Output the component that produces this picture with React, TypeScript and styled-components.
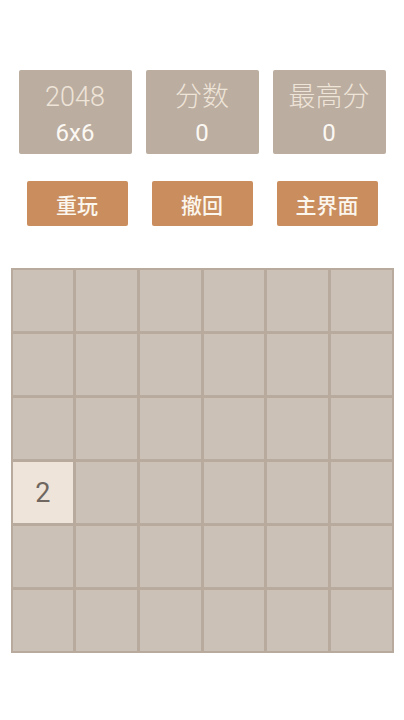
import React from "react";
import styled, { createGlobalStyle } from "styled-components";

const GlobalStyle = createGlobalStyle`
  html, body {
    margin: 0;
    padding: 0;
    background: #ffffff;
    font-family: Roboto, "Noto Sans CJK SC", sans-serif;
  }
`;

const Page = styled.div`
  display: flex;
  flex-direction: column;
  align-items: center;
  padding-top: 70px;
`;

const StatsRow = styled.div`
  display: flex;
  gap: 14px;
`;

const StatBox = styled.div`
  width: 113px;
  height: 84px;
  box-sizing: border-box;
  padding-top: 5px;
  background: #bbada0;
  border-radius: 2px;
  display: flex;
  flex-direction: column;
  align-items: center;
  justify-content: center;
  gap: 4px;
`;

const StatLabel = styled.div`
  font-size: 27px;
  font-weight: 300;
  line-height: 32px;
  color: #eee4d8;
`;

const StatValue = styled.div`
  font-size: 24px;
  line-height: 32px;
  color: #fbf8f3;
`;

const ButtonRow = styled.div`
  display: flex;
  gap: 24px;
  margin-top: 27px;
`;

const ActionButton = styled.button`
  width: 101px;
  height: 45px;
  border: none;
  border-radius: 2px;
  background: #c98d5e;
  color: #fbf6ee;
  font-family: "Noto Sans CJK SC", sans-serif;
  font-size: 21px;
  font-weight: 500;
  padding: 0;
`;

const Board = styled.div`
  margin-top: 42px;
  width: 383px;
  height: 385px;
  box-sizing: border-box;
  padding: 2px;
  background: #b8ab9e;
  display: grid;
  grid-template-columns: repeat(6, 1fr);
  grid-template-rows: repeat(6, 1fr);
  gap: 3px;
`;

const Cell = styled.div<{ $value?: number }>`
  background: ${(p) => (p.$value ? "#eee4da" : "#cbc1b6")};
  color: #6f6760;
  display: flex;
  align-items: center;
  justify-content: center;
  font-size: 27px;
`;

const grid: number[] = Array(36).fill(0);
grid[18] = 2;

export default function App() {
  return (
    <Page>
      <GlobalStyle />
      <StatsRow>
        <StatBox>
          <StatLabel>2048</StatLabel>
          <StatValue>6x6</StatValue>
        </StatBox>
        <StatBox>
          <StatLabel>分数</StatLabel>
          <StatValue>0</StatValue>
        </StatBox>
        <StatBox>
          <StatLabel>最高分</StatLabel>
          <StatValue>0</StatValue>
        </StatBox>
      </StatsRow>
      <ButtonRow>
        <ActionButton>重玩</ActionButton>
        <ActionButton>撤回</ActionButton>
        <ActionButton>主界面</ActionButton>
      </ButtonRow>
      <Board>
        {grid.map((v, i) => (
          <Cell key={i} $value={v}>
            {v ? v : null}
          </Cell>
        ))}
      </Board>
    </Page>
  );
}
